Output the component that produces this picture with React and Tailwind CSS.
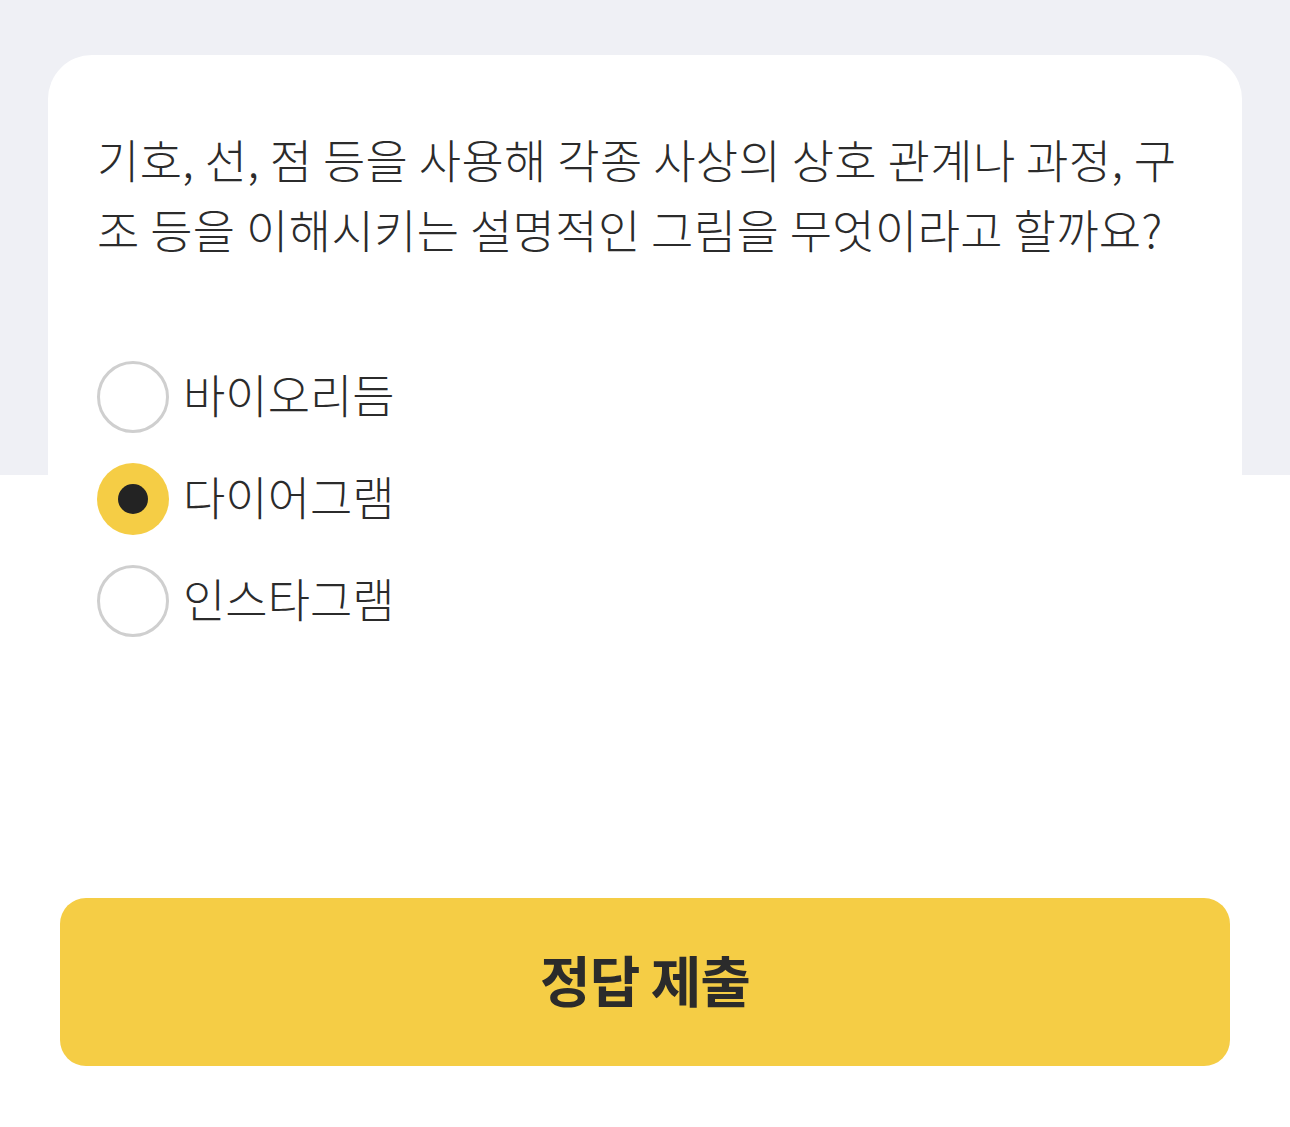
import React, { useState } from "react";

const OPTIONS = ["바이오리듬", "다이어그램", "인스타그램"];

const Radio = ({ checked }) =>
  checked ? (
    <span className="w-[72px] h-[72px] rounded-full bg-[#f5cd45] flex items-center justify-center shrink-0">
      <span className="w-[30px] h-[30px] rounded-full bg-[#232323]" />
    </span>
  ) : (
    <span className="w-[72px] h-[72px] rounded-full border-[3px] border-[#cfcfcf] bg-white shrink-0" />
  );

export default function App() {
  const [selected, setSelected] = useState(1);

  return (
    <div
      className="min-h-[1127px] w-full bg-[linear-gradient(#eff0f5_475px,#ffffff_475px)] pt-[55px] flex flex-col text-[#2b2b2b]"
      style={{ fontFamily: '"Noto Sans CJK KR", "Noto Sans", sans-serif' }}
    >
      <div className="mx-[48px] bg-white rounded-t-[44px] px-[49px] pt-[68px] h-[740px]">
        <p className="text-[46px] leading-[70px] font-light tracking-[0.35px]">
          기호, 선, 점 등을 사용해 각종 사상의 상호 관계나 과정, 구조 등을 이해시키는 설명적인 그림을 무엇이라고 할까요?
        </p>
        <div className="mt-[98px] flex flex-col gap-[30px]">
          {OPTIONS.map((label, i) => (
            <button
              key={label}
              onClick={() => setSelected(i)}
              className="flex items-center gap-[14px] text-left"
            >
              <Radio checked={selected === i} />
              <span className="text-[46px] leading-[64px] font-light pb-[8px]">{label}</span>
            </button>
          ))}
        </div>
      </div>
      <div className="px-[60px] mt-[103px]">
        <button className="w-full h-[168px] rounded-[26px] bg-[#f5cd45] text-[55px] font-bold text-[#2b2b2b] tracking-[-1px] pb-[8px]">
          정답 제출
        </button>
      </div>
    </div>
  );
}
